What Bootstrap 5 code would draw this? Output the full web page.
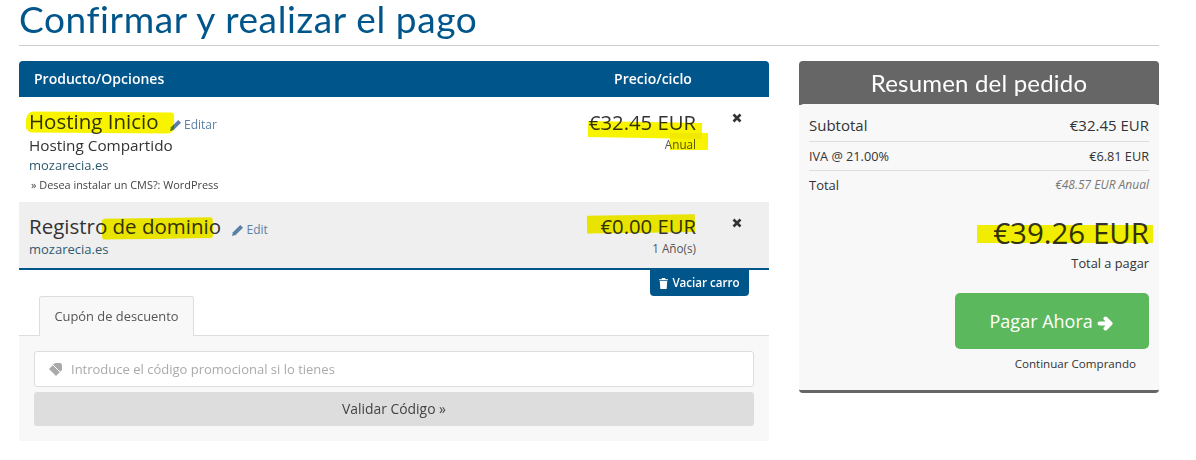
<!DOCTYPE html>
<html>
<head>
    <meta charset="UTF-8">
    <title>Confirmar y realizar el pago</title>
    <link href="https://cdn.jsdelivr.net/npm/bootstrap@5.3.0/dist/css/bootstrap.min.css" rel="stylesheet">
    <style>
        body { font-family: "Open Sans", sans-serif; font-size: 14px; color: #333; background: #fff; overflow: hidden; }
        a { text-decoration: none; }
        .page-wrap { width: 1140px; margin-left: 19px; }
        .page-title { font-family: Lato, sans-serif; font-weight: 400; font-size: 37px; line-height: 38px; color: #00558b; margin: 0; padding-bottom: 7px; border-bottom: 1px solid #ccc; letter-spacing: .62px; }
        .cols { margin-top: 15px; gap: 30px; }
        .col-left { width: 750px; }
        .col-right { width: 360px; }
        .items-head { height: 36px; background: #00558b; color: #fff; border-radius: 4px 4px 0 0; font-weight: 600; font-size: 14px; padding: 0 0 2px 15px; }
        .col-price { width: 178px; text-align: right; flex-shrink: 0; position: relative; }
        .head-price { width: 178px; text-align: center; margin-right: 27px; }
        .col-remove { width: 73px; flex-shrink: 0; padding-left: 36px; }
        .item-row { padding-left: 10px; position: relative; }
        .item-one { height: 105px; padding-top: 12px; }
        .item-two { height: 68px; padding-top: 11px; background: #efefef; border-bottom: 2px solid #00558b; }
        .item-name { font-size: 20.5px; line-height: 26px; margin-top: -1px; }
        .item-two .item-name { margin-top: 0; }
        .item-edit { font-size: 12px; color: #5b7fa6; margin-left: 6px; }
        .item-group { font-size: 15.3px; line-height: 20px; margin-top: -3px; }
        .item-domain { font-size: 13px; line-height: 20px; color: #2f5a70; }
        .item-two .item-domain { margin-top: -4px; }
        .item-option { font-size: 10.9px; line-height: 20px; color: #444; padding-left: 2px; }
        .item-price { font-size: 20.3px; line-height: 26px; }
        .item-cycle { font-size: 11.7px; line-height: 18px; color: #555; }
        .remove-x { display: block; margin-top: 4px; }
        .item-two .remove-x { margin-top: 5px; }
        .btn-empty { background: #00558b; color: #fff; font-size: 11.6px; font-weight: 600; height: 26px; width: 99px; border-radius: 0 0 4px 4px; margin-right: 20px; }
        .btn-empty:hover { background: #00558b; color: #fff; }
        .tab-head { padding-left: 20px; height: 40px; border-bottom: 1px solid #ddd; }
        .tab-one { width: 155px; height: 40px; background: #f8f8f8; border: 1px solid #ddd; border-bottom: 0; border-radius: 3px 3px 0 0; font-size: 12.9px; color: #555; }
        .tab-panel { background: #f8f8f8; height: 105px; padding: 15px; }
        .promo-box { height: 36px; background: #fff; border: 1px solid #ddd; border-radius: 3px; padding-left: 13px; gap: 8px; }
        .promo-input { border: 0; outline: 0; flex: 1; font-size: 13px; background: transparent; font-family: inherit; padding: 1px 0 0; }
        .promo-input::placeholder { color: #aaa; opacity: 1; }
        .btn-validate { display: block; width: 100%; height: 34px; margin-top: 5px; background: #ddd; color: #444; font-size: 13.9px; border-radius: 3px; line-height: 20px; }
        .btn-validate:hover { background: #ddd; }
        .sum-box { border-radius: 4px; overflow: hidden; border-bottom: 3px solid #666; background: #f8f8f8; }
        .sum-head { height: 44px; background: #666; color: #fff; font-family: Lato, sans-serif; font-weight: 400; font-size: 24px; letter-spacing: .2px; line-height: 44px; text-align: center; }
        .sum-body { height: 286px; padding: 0 10px; position: relative; border-radius: 5px 5px 0 0; margin-top: -1px; background: #f8f8f8; }
        .sum-line { border-bottom: 1px solid #ddd; }
        .sum-sub { height: 38px; font-size: 15px; padding-top: 10px; }
        .sum-tax { height: 29px; font-size: 12.7px; padding-top: 5px; }
        .sum-total { height: 29px; font-size: 13px; padding-top: 5px; }
        .sum-total em { font-size: 12px; color: #777; }
        .sum-price { font-size: 29.5px; line-height: 40px; margin-top: 13px; text-align: right; position: relative; }
        .sum-note { font-size: 12.8px; line-height: 20px; text-align: right; margin-top: 0; }
        .btn-pay { display: block; width: 194px; height: 56px; margin: 20px 0 0 auto; background: #5cb85c; color: #fff; font-size: 18px; line-height: 42px; border-radius: 5px; }
        .btn-pay:hover { background: #5cb85c; color: #fff; }
        .sum-link { font-size: 11.6px; line-height: 20px; color: #333; text-align: right; padding-right: 13px; margin-top: 5px; }
        .marker { position: absolute; background: #f8f400; mix-blend-mode: multiply; pointer-events: none; }
        .mk-name1 { left: 7px; top: 15px; width: 148px; height: 21px; border-radius: 8px 3px 6px 6px; transform: rotate(.4deg); }
        .mk-name2 { left: 83px; top: 16px; width: 111px; height: 21px; border-radius: 3px; transform: rotate(-.8deg); }
        .mk-price1 { right: -6px; top: 13px; width: 114px; height: 16px; transform: rotate(1deg); }
        .mk-cycle1 { right: -12px; top: 24px; width: 38px; height: 17px; }
        .mk-price2 { right: 1px; top: 2px; width: 108px; height: 18px; transform: rotate(-.8deg); }
        .mk-total { right: -4px; top: 12px; width: 176px; height: 18px; }
    </style>
</head>
<body>
    <div class="page-wrap">
        <h1 class="page-title">Confirmar y realizar el pago</h1>
        <div class="d-flex cols">
            <div class="col-left">
                <div class="d-flex align-items-center justify-content-between items-head">
                    <span>Producto/Opciones</span>
                    <span class="head-price">Precio/ciclo</span>
                </div>
                <div class="d-flex item-row item-one">
                    <div class="flex-grow-1">
                        <span class="marker mk-name1"></span>
                        <div class="item-name">Hosting Inicio
                            <a href="#" class="item-edit"><svg width="11" height="11" viewBox="0 0 12 12"><path d="M9 0 12 3 4 11 0 12 1 8z" fill="#5b7fa6"/></svg> Editar</a>
                        </div>
                        <div class="item-group">Hosting Compartido</div>
                        <div class="item-domain">mozarecia.es</div>
                        <div class="item-option">» Desea instalar un CMS?: WordPress</div>
                    </div>
                    <div class="col-price">
                        <span class="marker mk-price1"></span>
                        <span class="marker mk-cycle1"></span>
                        <div class="item-price">€32.45 EUR</div>
                        <div class="item-cycle">Anual</div>
                    </div>
                    <div class="col-remove">
                        <svg class="remove-x" width="10" height="10" viewBox="0 0 10 10"><path d="M1.500 1.500l7 7M8.500 1.500l-7 7" stroke="#333" stroke-width="2.600"/></svg>
                    </div>
                </div>
                <div class="d-flex item-row item-two">
                    <div class="flex-grow-1">
                        <span class="marker mk-name2"></span>
                        <div class="item-name">Registro de dominio
                            <a href="#" class="item-edit"><svg width="11" height="11" viewBox="0 0 12 12"><path d="M9 0 12 3 4 11 0 12 1 8z" fill="#5b7fa6"/></svg> Edit</a>
                        </div>
                        <div class="item-domain">mozarecia.es</div>
                    </div>
                    <div class="col-price">
                        <span class="marker mk-price2"></span>
                        <div class="item-price">€0.00 EUR</div>
                        <div class="item-cycle">1 Año(s)</div>
                    </div>
                    <div class="col-remove">
                        <svg class="remove-x" width="10" height="10" viewBox="0 0 10 10"><path d="M1.500 1.500l7 7M8.500 1.500l-7 7" stroke="#333" stroke-width="2.600"/></svg>
                    </div>
                </div>
                <div class="d-flex justify-content-end">
                    <a href="#" class="btn btn-empty p-0 d-flex align-items-center justify-content-center gap-1">
                        <svg width="9" height="11" viewBox="0 0 9 11"><path d="M3 0h3l.5 1.200H9v1H0v-1h2.500zM.8 3h7.400l-.5 8H1.300z" fill="#fff"/></svg>Vaciar carro
                    </a>
                </div>
                <div class="tab-head">
                    <div class="tab-one d-flex align-items-center justify-content-center">Cupón de descuento</div>
                </div>
                <div class="tab-panel">
                    <div class="d-flex align-items-center promo-box">
                        <svg width="15" height="13" viewBox="0 0 15 13"><path d="M7 0h5.500L14 1.500V7l-6 6-7-7z" fill="#aaa"/><path d="M5 2l7 7" stroke="#fff" stroke-width="1"/></svg>
                        <input class="promo-input" type="text" placeholder="Introduce el código promocional si lo tienes">
                    </div>
                    <a href="#" class="btn btn-validate">Validar Código »</a>
                </div>
            </div>
            <div class="col-right">
                <div class="sum-box">
                    <div class="sum-head">Resumen del pedido</div>
                    <div class="sum-body">
                        <div class="d-flex justify-content-between sum-line sum-sub"><span>Subtotal</span><span>€32.45 EUR</span></div>
                        <div class="d-flex justify-content-between sum-line sum-tax"><span>IVA @ 21.00%</span><span>€6.81 EUR</span></div>
                        <div class="d-flex justify-content-between sum-total"><span>Total</span><em>€48.57 EUR Anual</em></div>
                        <div class="sum-price"><span class="marker mk-total"></span>€39.26 EUR</div>
                        <div class="sum-note">Total a pagar</div>
                        <a href="#" class="btn btn-pay">Pagar Ahora <svg width="17" height="15" viewBox="0 0 16 15"><path d="M2 7.500h10M8 2.500l5 5-5 5" fill="none" stroke="#fff" stroke-width="4" stroke-linecap="round" stroke-linejoin="round"/></svg></a>
                        <div class="sum-link">Continuar Comprando</div>
                    </div>
                </div>
            </div>
        </div>
    </div>
    <script src="https://cdn.jsdelivr.net/npm/bootstrap@5.3.0/dist/js/bootstrap.bundle.min.js"></script>
</body>
</html>
